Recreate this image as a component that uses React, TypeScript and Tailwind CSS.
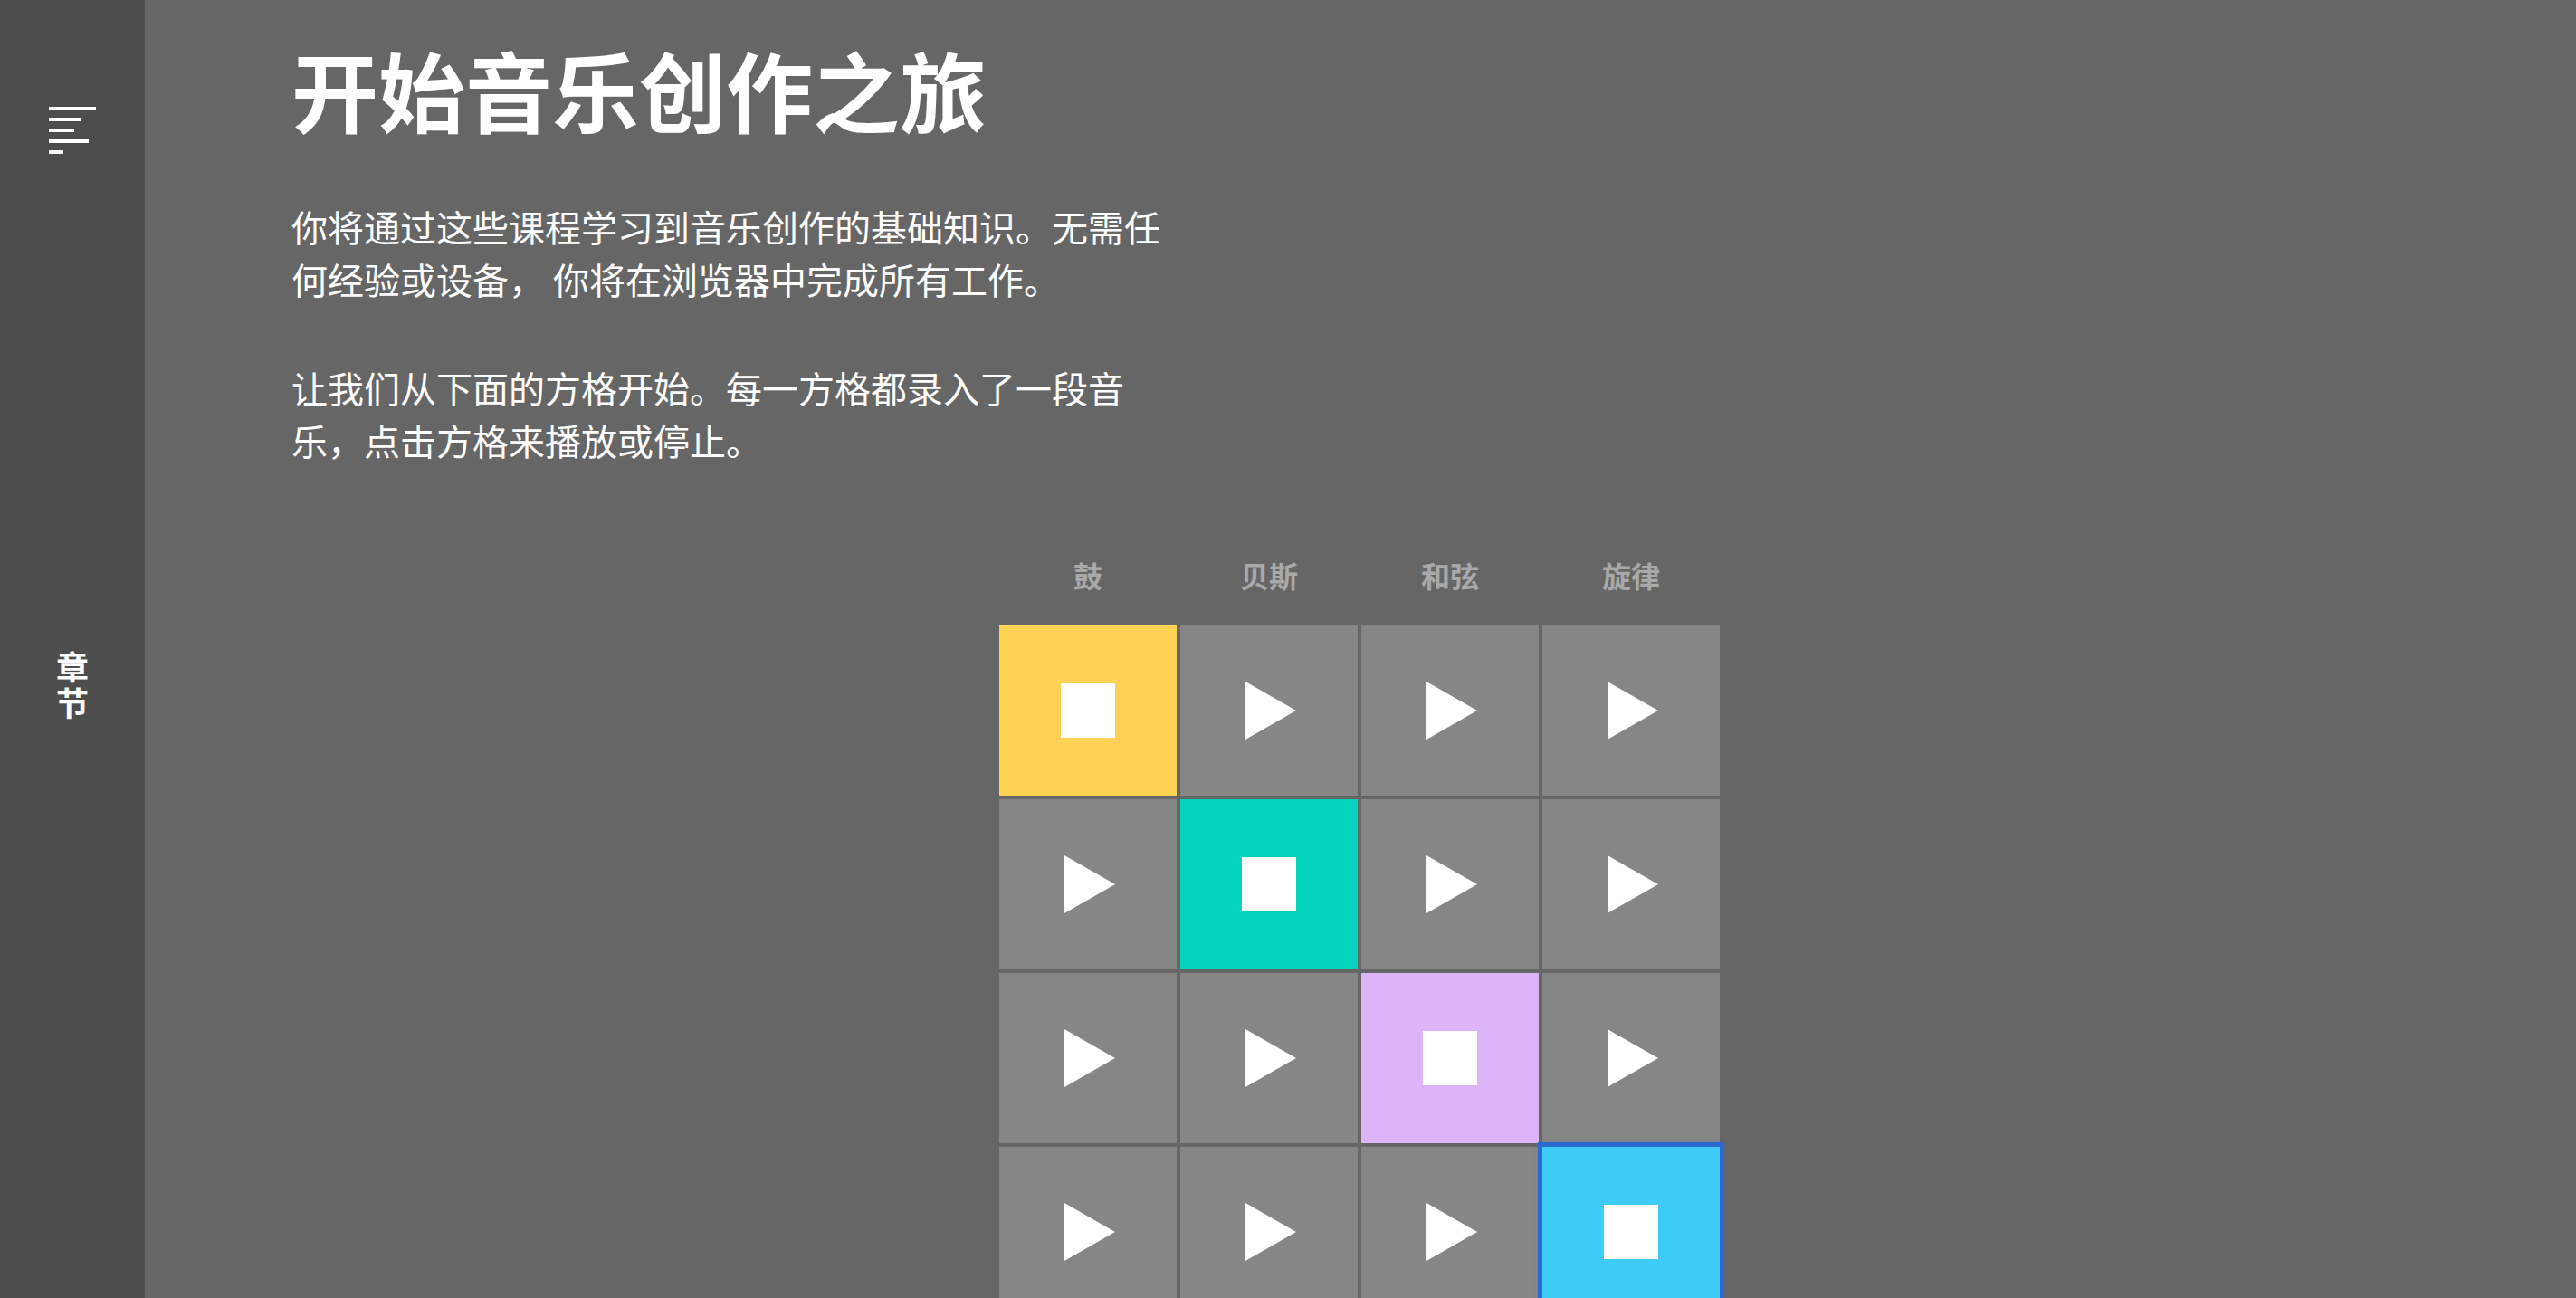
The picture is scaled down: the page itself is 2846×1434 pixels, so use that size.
import React from "react";

type Cell = { color?: string; playing?: boolean; focused?: boolean };

const labels = ["鼓", "贝斯", "和弦", "旋律"];

const rows: Cell[][] = [
  [{ color: "bg-[#ffd154]", playing: true }, {}, {}, {}],
  [{}, { color: "bg-[#03d3bf]", playing: true }, {}, {}],
  [{}, {}, { color: "bg-[#dcb4fa]", playing: true }, {}],
  [{}, {}, {}, { color: "bg-[#3ecbf8]", playing: true, focused: true }],
];

function Play() {
  return (
    <svg width="56" height="64" viewBox="0 0 56 64" className="ml-[4px]">
      <polygon points="0,0 56,32 0,64" fill="#ffffff" />
    </svg>
  );
}

function Stop() {
  return <div className="w-[60px] h-[60px] bg-white" />;
}

export default function App() {
  return (
    <div
      className="flex min-h-screen bg-[#666666] text-white"
      style={{ fontFamily: '"Noto Sans CJK SC", "Noto Sans", sans-serif' }}
    >
      <aside className="w-[160px] shrink-0 bg-[#4d4d4d] h-screen sticky top-0 flex flex-col items-center">
        <div className="mt-[118px] flex flex-col gap-[8px] w-[52px]">
          <div className="h-[4px] w-[52px] bg-white" />
          <div className="h-[4px] w-[36px] bg-white" />
          <div className="h-[4px] w-[28px] bg-white" />
          <div className="h-[4px] w-[44px] bg-white" />
          <div className="h-[4px] w-[16px] bg-white" />
        </div>
        <div className="mt-[545px] w-[36px] text-center text-[36px] leading-[40px] font-bold break-all">
          章节
        </div>
      </aside>
      <main className="flex-1 flex flex-col">
        <div className="pl-[162px] pt-[40px]">
          <h1 className="text-[96px] leading-[1.2] font-bold">开始音乐创作之旅</h1>
          <div className="mt-[66px] max-w-[980px] text-[40px] leading-[58px]">
            <p>你将通过这些课程学习到音乐创作的基础知识。无需任何经验或设备， 你将在浏览器中完成所有工作。</p>
            <p className="mt-[62px]">让我们从下面的方格开始。每一方格都录入了一段音乐，点击方格来播放或停止。</p>
          </div>
        </div>
        <div className="self-center w-[796px] mt-[100px] pb-[20px] -translate-x-[1px]">
          <div className="grid grid-cols-4 gap-[4px] mb-[36px]">
            {labels.map((l) => (
              <div key={l} className="text-center text-[32px] leading-[40px] font-bold text-[#a9a9a9]">
                {l}
              </div>
            ))}
          </div>
          <div className="grid grid-cols-4 gap-[4px]">
            {rows.flat().map((c, i) => (
              <div
                key={i}
                className={
                  "h-[188px] flex items-center justify-center " +
                  (c.color ?? "bg-[#868686]") +
                  (c.focused
                    ? " relative z-10 outline-[5px] outline-solid outline-[#2c69cf] shadow-[0_0_4px_4px_rgba(44,105,207,0.6)]"
                    : "")
                }
              >
                {c.playing ? <Stop /> : <Play />}
              </div>
            ))}
          </div>
        </div>
      </main>
    </div>
  );
}
